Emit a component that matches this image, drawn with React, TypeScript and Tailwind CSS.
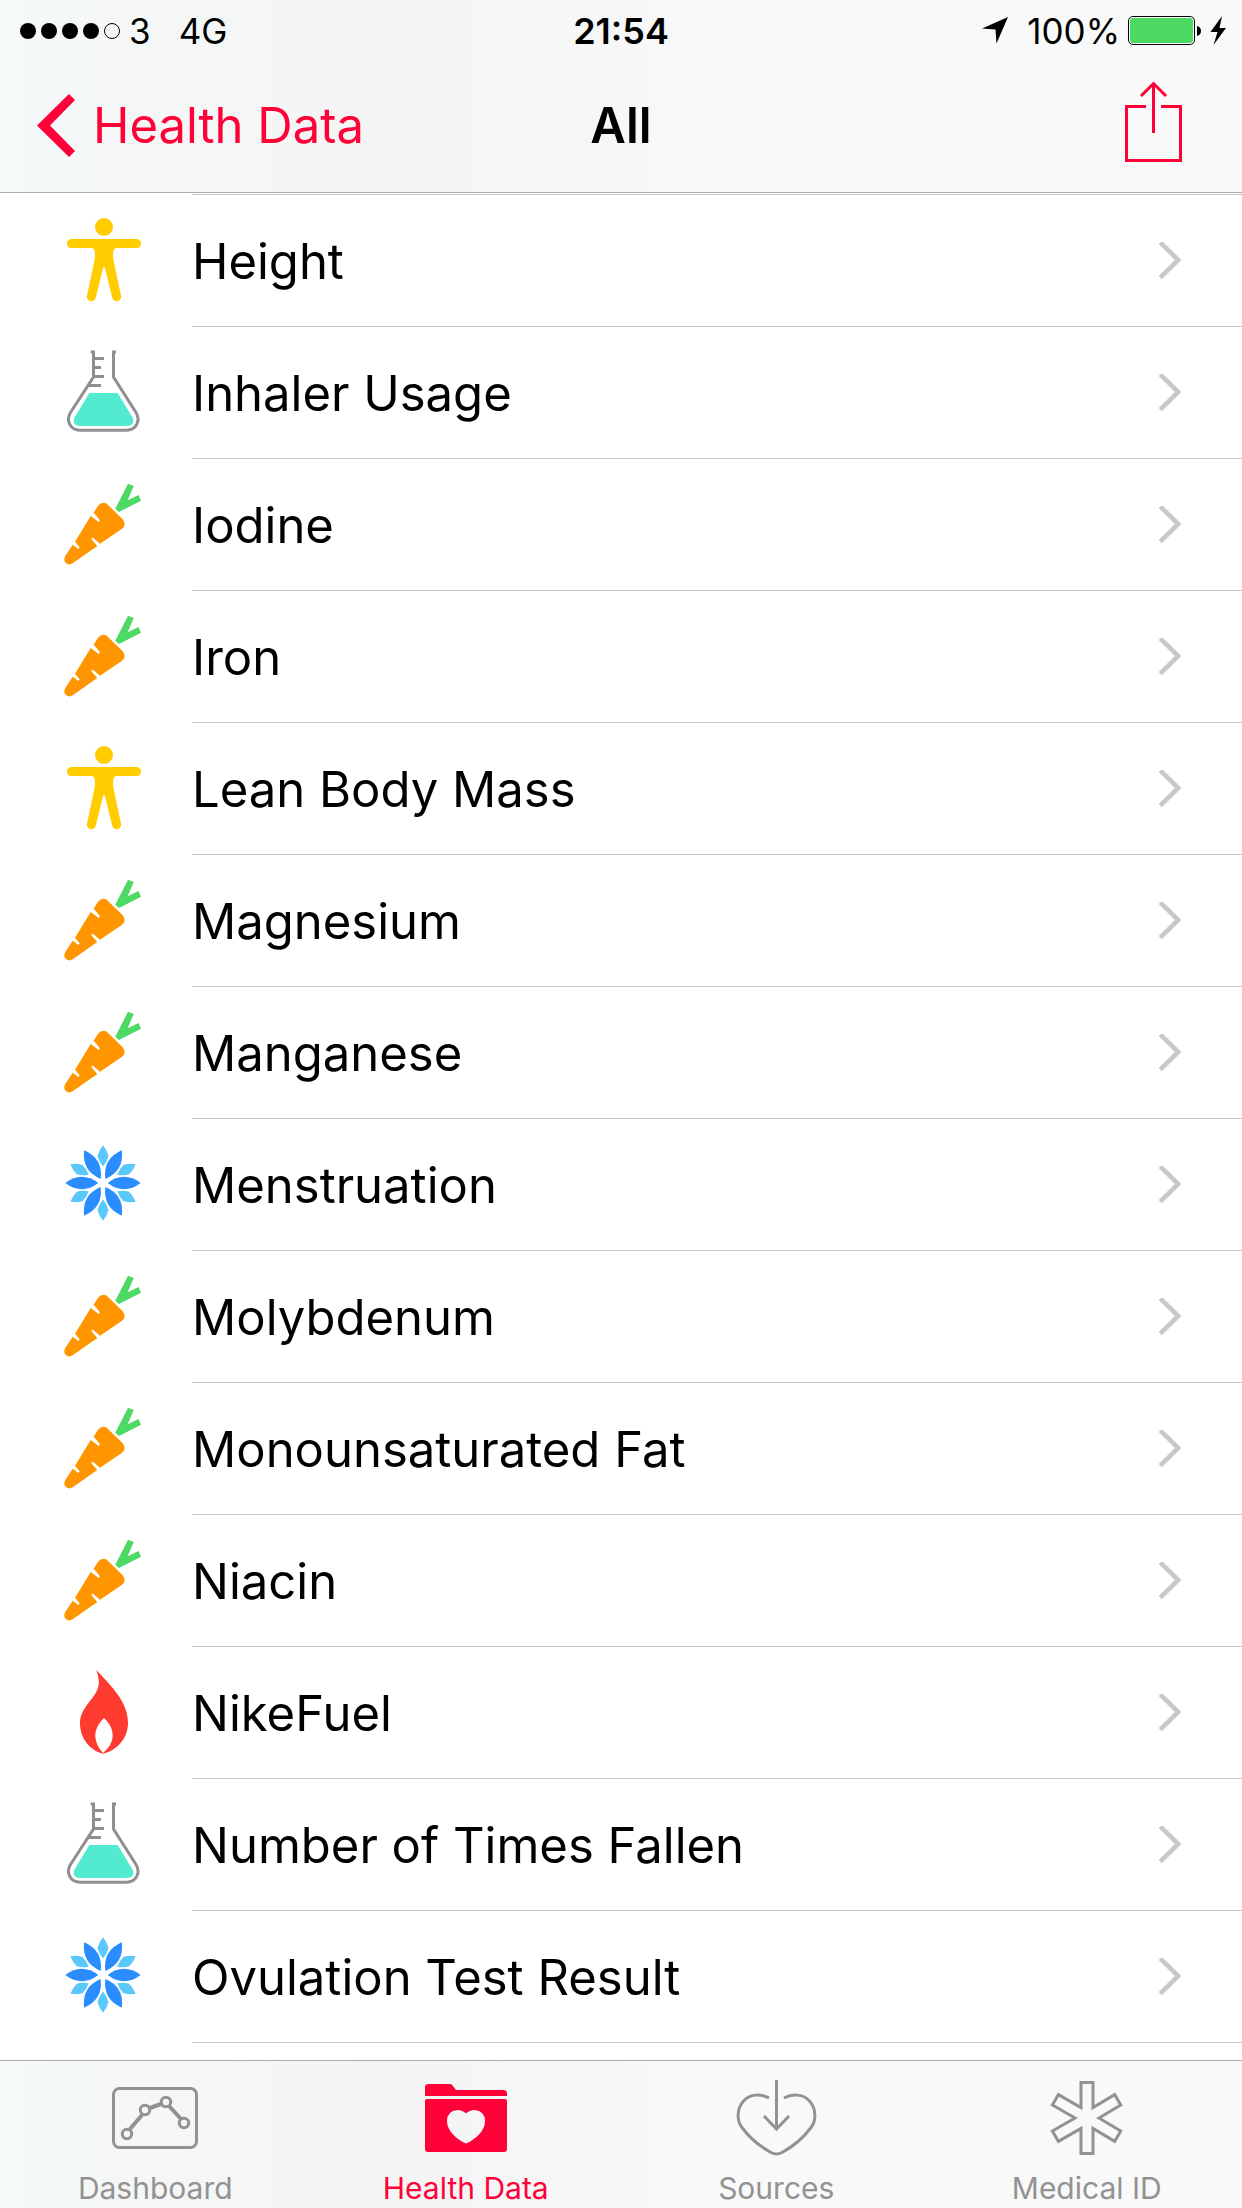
import React from 'react';

type IconName = 'body' | 'flask' | 'carrot' | 'flower' | 'flame';

const rows: { label: string; icon: IconName }[] = [
    { label: 'Height', icon: 'body' },
    { label: 'Inhaler Usage', icon: 'flask' },
    { label: 'Iodine', icon: 'carrot' },
    { label: 'Iron', icon: 'carrot' },
    { label: 'Lean Body Mass', icon: 'body' },
    { label: 'Magnesium', icon: 'carrot' },
    { label: 'Manganese', icon: 'carrot' },
    { label: 'Menstruation', icon: 'flower' },
    { label: 'Molybdenum', icon: 'carrot' },
    { label: 'Monounsaturated Fat', icon: 'carrot' },
    { label: 'Niacin', icon: 'carrot' },
    { label: 'NikeFuel', icon: 'flame' },
    { label: 'Number of Times Fallen', icon: 'flask' },
    { label: 'Ovulation Test Result', icon: 'flower' },
];

const BodyIcon = () => (
    <g fill="#ffcc00">
        <circle cx="44" cy="14" r="9" />
        <path d="M11.500 26H76.500A4.500 4.500 0 0 1 76.500 35H57.500Q53 35 53 40Q53 46 54 50L61 82.500A4.500 4.500 0 0 1 52.300 85L45 55.500Q44 53 43 55.500L35.700 85A4.500 4.500 0 0 1 27 82.500L34 50Q35 46 35 40Q35 35 30.500 35H11.500A4.500 4.500 0 0 1 11.500 26Z" />
    </g>
);

const FlaskIcon = () => (
    <g>
        <path d="M29.300 48H57.700L72.200 72C75 77 72.500 81 67 81H20C14.500 81 12 77 14.800 72Z" fill="#53ebcf" />
        <g fill="none" stroke="#8e8e93" strokeWidth="3">
            <path d="M30.700 7H33.500V32L10.500 67.500C5.500 76 10.500 85.200 20 85.200H66.500C76 85.200 81 76 76 67.500L53.500 32V7H56" />
            <path d="M33.500 13.500H44M33.500 22.500H41M33.500 31.500H44M29 40.500H41" />
        </g>
    </g>
);

const CarrotIcon = () => (
    <g>
        <path d="M68 6.700L73.700 9L67.700 23.300L78.500 18L81 23.700L59 35L55.300 31.700Z" fill="#4cd964" />
        <path d="M33.700 35.700L38 28.700Q42 24 47 27L62.700 42.300Q67 48 61.700 52L40 66.700L32.700 60.500L31.300 62L37.300 69L12.700 86.300Q8 89 5 85Q3.300 82 5.700 78.300L12.700 67.700L18.300 72L19.700 70.300L15 64.700L30.700 39L38.700 45L40 43.300Z" fill="#ff9500" />
    </g>
);

const FlowerIcon = () => (
    <g transform="translate(43 46)">
        {[0, 60, 120, 180, 240, 300].map((angle) => (
            <g key={angle} transform={`rotate(${angle})`}>
                <path d="M4.700 0Q21 -12.500 37.700 0Q21 12.500 4.700 0Z" fill="#2a8cff" />
                <path transform="rotate(30)" d="M37.700 0Q33 -4 27 -5.500Q21 -4 16.500 0Q21 4 27 5.500Q33 4 37.700 0Z" fill="#5ac8fa" />
            </g>
        ))}
    </g>
);

const FlameIcon = () => (
    <path
        fillRule="evenodd"
        fill="#ff3b30"
        d="M36.300 5L48 17.500C60 31 68 43 68 58C68 74 56 86 43 88.700C31 86 20 74 20 58.500C20 40 39 33 38.900 16.500Q38.500 10 36.300 5ZM44 53C38 59 35.300 65 35.300 71Q35.500 80 43 88Q52.500 80 52.700 71C52.700 64 49.500 58 44 53Z"
    />
);

const icons: Record<IconName, () => React.JSX.Element> = {
    body: BodyIcon,
    flask: FlaskIcon,
    carrot: CarrotIcon,
    flower: FlowerIcon,
    flame: FlameIcon,
};

const ChevronRight = () => (
    <svg className="w-6 h-10 mr-15 shrink-0" viewBox="0 0 24 40" fill="none" stroke="#c7c7cc" strokeWidth="4.600" aria-hidden="true">
        <path d="M2.300 0.400L20.200 18L2.300 35.600" />
    </svg>
);

const DashboardIcon = () => (
    <g fill="none" stroke="currentColor" strokeWidth="3">
        <rect x="6.500" y="10.500" width="83" height="59" rx="6" />
        <path d="M23 51L35 37M43 30L54 26M62 28L74 41" strokeWidth="4" />
        <circle cx="20" cy="56" r="4.700" />
        <circle cx="38" cy="32" r="4.700" />
        <circle cx="59" cy="24" r="4.700" />
        <circle cx="77" cy="45" r="4.700" />
    </g>
);

const FolderIcon = () => (
    <g fill="currentColor">
        <path d="M7 18V9Q7 6 10.500 6H32Q34 6 35 8L38 12H85.500Q89 12 89 15.500V18Z" />
        <path
            fillRule="evenodd"
            d="M9 21H87Q89 21 89 23V71Q89 74 86 74H10Q7 74 7 71V23Q7 21 9 21ZM48 35.500Q44.500 32 39.500 32Q29 33 29 43C29 53 38 61 48 65.500C58 61 67 53 67 43Q67 33 56.500 32Q51.500 32 48 35.500Z"
        />
    </g>
);

const SourcesIcon = () => (
    <g fill="none" stroke="currentColor" strokeWidth="3">
        <path d="M41 20C33 15.500 22 16 16 22.500C8 31 9 43 14 49.500C22 60.500 33 69 43 74.500Q48.500 77.500 54 74.500C64 69 75 60.500 83 49.500C88 43 89 31 81 22.500C75 16 64 15.500 56 20" />
        <path d="M48.500 2V51M36 38L48.500 51L61 38" />
    </g>
);

const MedicalIcon = () => (
    <path
        d="M42 4.500H54V29.600L75.700 16.600L81.700 27L60 40L81.700 53L75.700 63.400L54 50.400V75.500H42V50.400L19.400 63.400L13.400 53L36 40L13.400 27L19.400 16.600L42 29.600Z"
        fill="none"
        stroke="currentColor"
        strokeWidth="3"
    />
);

const tabs = [
    { label: 'Dashboard', Icon: DashboardIcon },
    { label: 'Health Data', Icon: FolderIcon, active: true },
    { label: 'Sources', Icon: SourcesIcon },
    { label: 'Medical ID', Icon: MedicalIcon },
];

const StatusBar = () => (
    <div className="h-[62px] px-4 grid grid-cols-[1fr_auto_1fr] items-center text-[35px]">
        <div className="flex items-center pl-1">
            <div className="flex gap-[5px] mr-[9px]">
                <span className="size-4 rounded-full bg-black" />
                <span className="size-4 rounded-full bg-black" />
                <span className="size-4 rounded-full bg-black" />
                <span className="size-4 rounded-full bg-black" />
                <span className="size-4 rounded-full border border-black" />
            </div>
            <span>3</span>
            <span className="ml-7">4G</span>
        </div>
        <time className="font-semibold text-[36px]">21:54</time>
        <div className="flex items-center justify-end">
            <svg className="w-7 h-7 mr-[18px]" viewBox="0 0 28 28" aria-hidden="true">
                <path d="M27 0L15.500 26.500L14.500 12.500L1 11.500Z" />
            </svg>
            <span className="mr-2">100%</span>
            <svg className="w-[74px] h-[30px] mr-2" viewBox="0 0 74 30" aria-hidden="true">
                <rect x="0.500" y="0.500" width="66" height="28" rx="4.500" fill="#fff" stroke="#000" />
                <rect x="2" y="2" width="63" height="25" rx="3" fill="#4cd964" />
                <path d="M69 10Q73 11 73 15Q73 19 69 20Z" />
            </svg>
            <svg className="w-4 h-[30px]" viewBox="0 0 16 30" aria-hidden="true">
                <path d="M12 0L0.500 16H7.500L3.500 29L16 12H9.500Z" />
            </svg>
        </div>
    </div>
);

export default function App() {
    return (
        <div className="min-h-screen flex flex-col bg-white text-black font-['Inter',sans-serif]">
            <header className="border-b border-[#acacac] bg-linear-to-r from-[#f6f9f9] via-[#f4f4f4] via-30% to-[#f9f9f9] to-60%">
                <StatusBar />
                <nav className="h-[130px] pb-0.5 px-9 grid grid-cols-[1fr_auto_1fr] items-center text-[49px]">
                    <a href="#" className="flex items-center text-[#ff0038]">
                        <svg className="w-10 h-16 mr-[17px]" viewBox="0 0 40 64" fill="currentColor" aria-hidden="true">
                            <path d="M33 0L39 6L14 31.500L39 57L33 63L1 31.500Z" />
                        </svg>
                        Health Data
                    </a>
                    <h1 className="font-semibold">All</h1>
                    <button type="button" aria-label="Share" className="justify-self-end mr-6 text-[#ff0038]">
                        <svg className="w-[57px] h-[90px]" viewBox="0 0 57 90" fill="none" stroke="currentColor" strokeWidth="3">
                            <path d="M21 25.500H1.500V79.500H55.500V25.500H36" />
                            <path d="M28.500 52V2M16 15L28.500 2.500L41 15" />
                        </svg>
                    </button>
                </nav>
            </header>

            <main className="flex-1 pt-px">
                <ul>
                    <li className="ml-48 h-px bg-[#c8c7cc]" />
                    {rows.map(({ label, icon }) => {
                        const Icon = icons[icon];
                        return (
                            <li key={label}>
                                <a href="#" className="flex h-[132px] pl-15">
                                    <span className="w-33 flex items-center shrink-0">
                                        <svg className="w-[88px] h-[96px]" viewBox="0 0 88 96" aria-hidden="true">
                                            <Icon />
                                        </svg>
                                    </span>
                                    <span className="flex-1 pt-0.5 flex items-center justify-between border-b border-[#c8c7cc] text-[49px]">
                                        {label}
                                        <ChevronRight />
                                    </span>
                                </a>
                            </li>
                        );
                    })}
                </ul>
            </main>

            <nav className="h-[148px] pt-[17px] grid grid-cols-4 border-t border-[#acacac] bg-linear-to-r from-[#f6f9f9] via-[#f4f4f4] via-30% to-[#f9f9f9] to-60%">
                {tabs.map(({ label, Icon, active }) => (
                    <a
                        key={label}
                        href="#"
                        aria-current={active ? 'page' : undefined}
                        className={`flex flex-col items-center gap-3.5 text-[30px] leading-8 ${active ? 'text-[#ff0038]' : 'text-[#929292]'}`}
                    >
                        <svg className="w-24 h-20" viewBox="0 0 96 80" aria-hidden="true">
                            <Icon />
                        </svg>
                        {label}
                    </a>
                ))}
            </nav>
        </div>
    );
}
